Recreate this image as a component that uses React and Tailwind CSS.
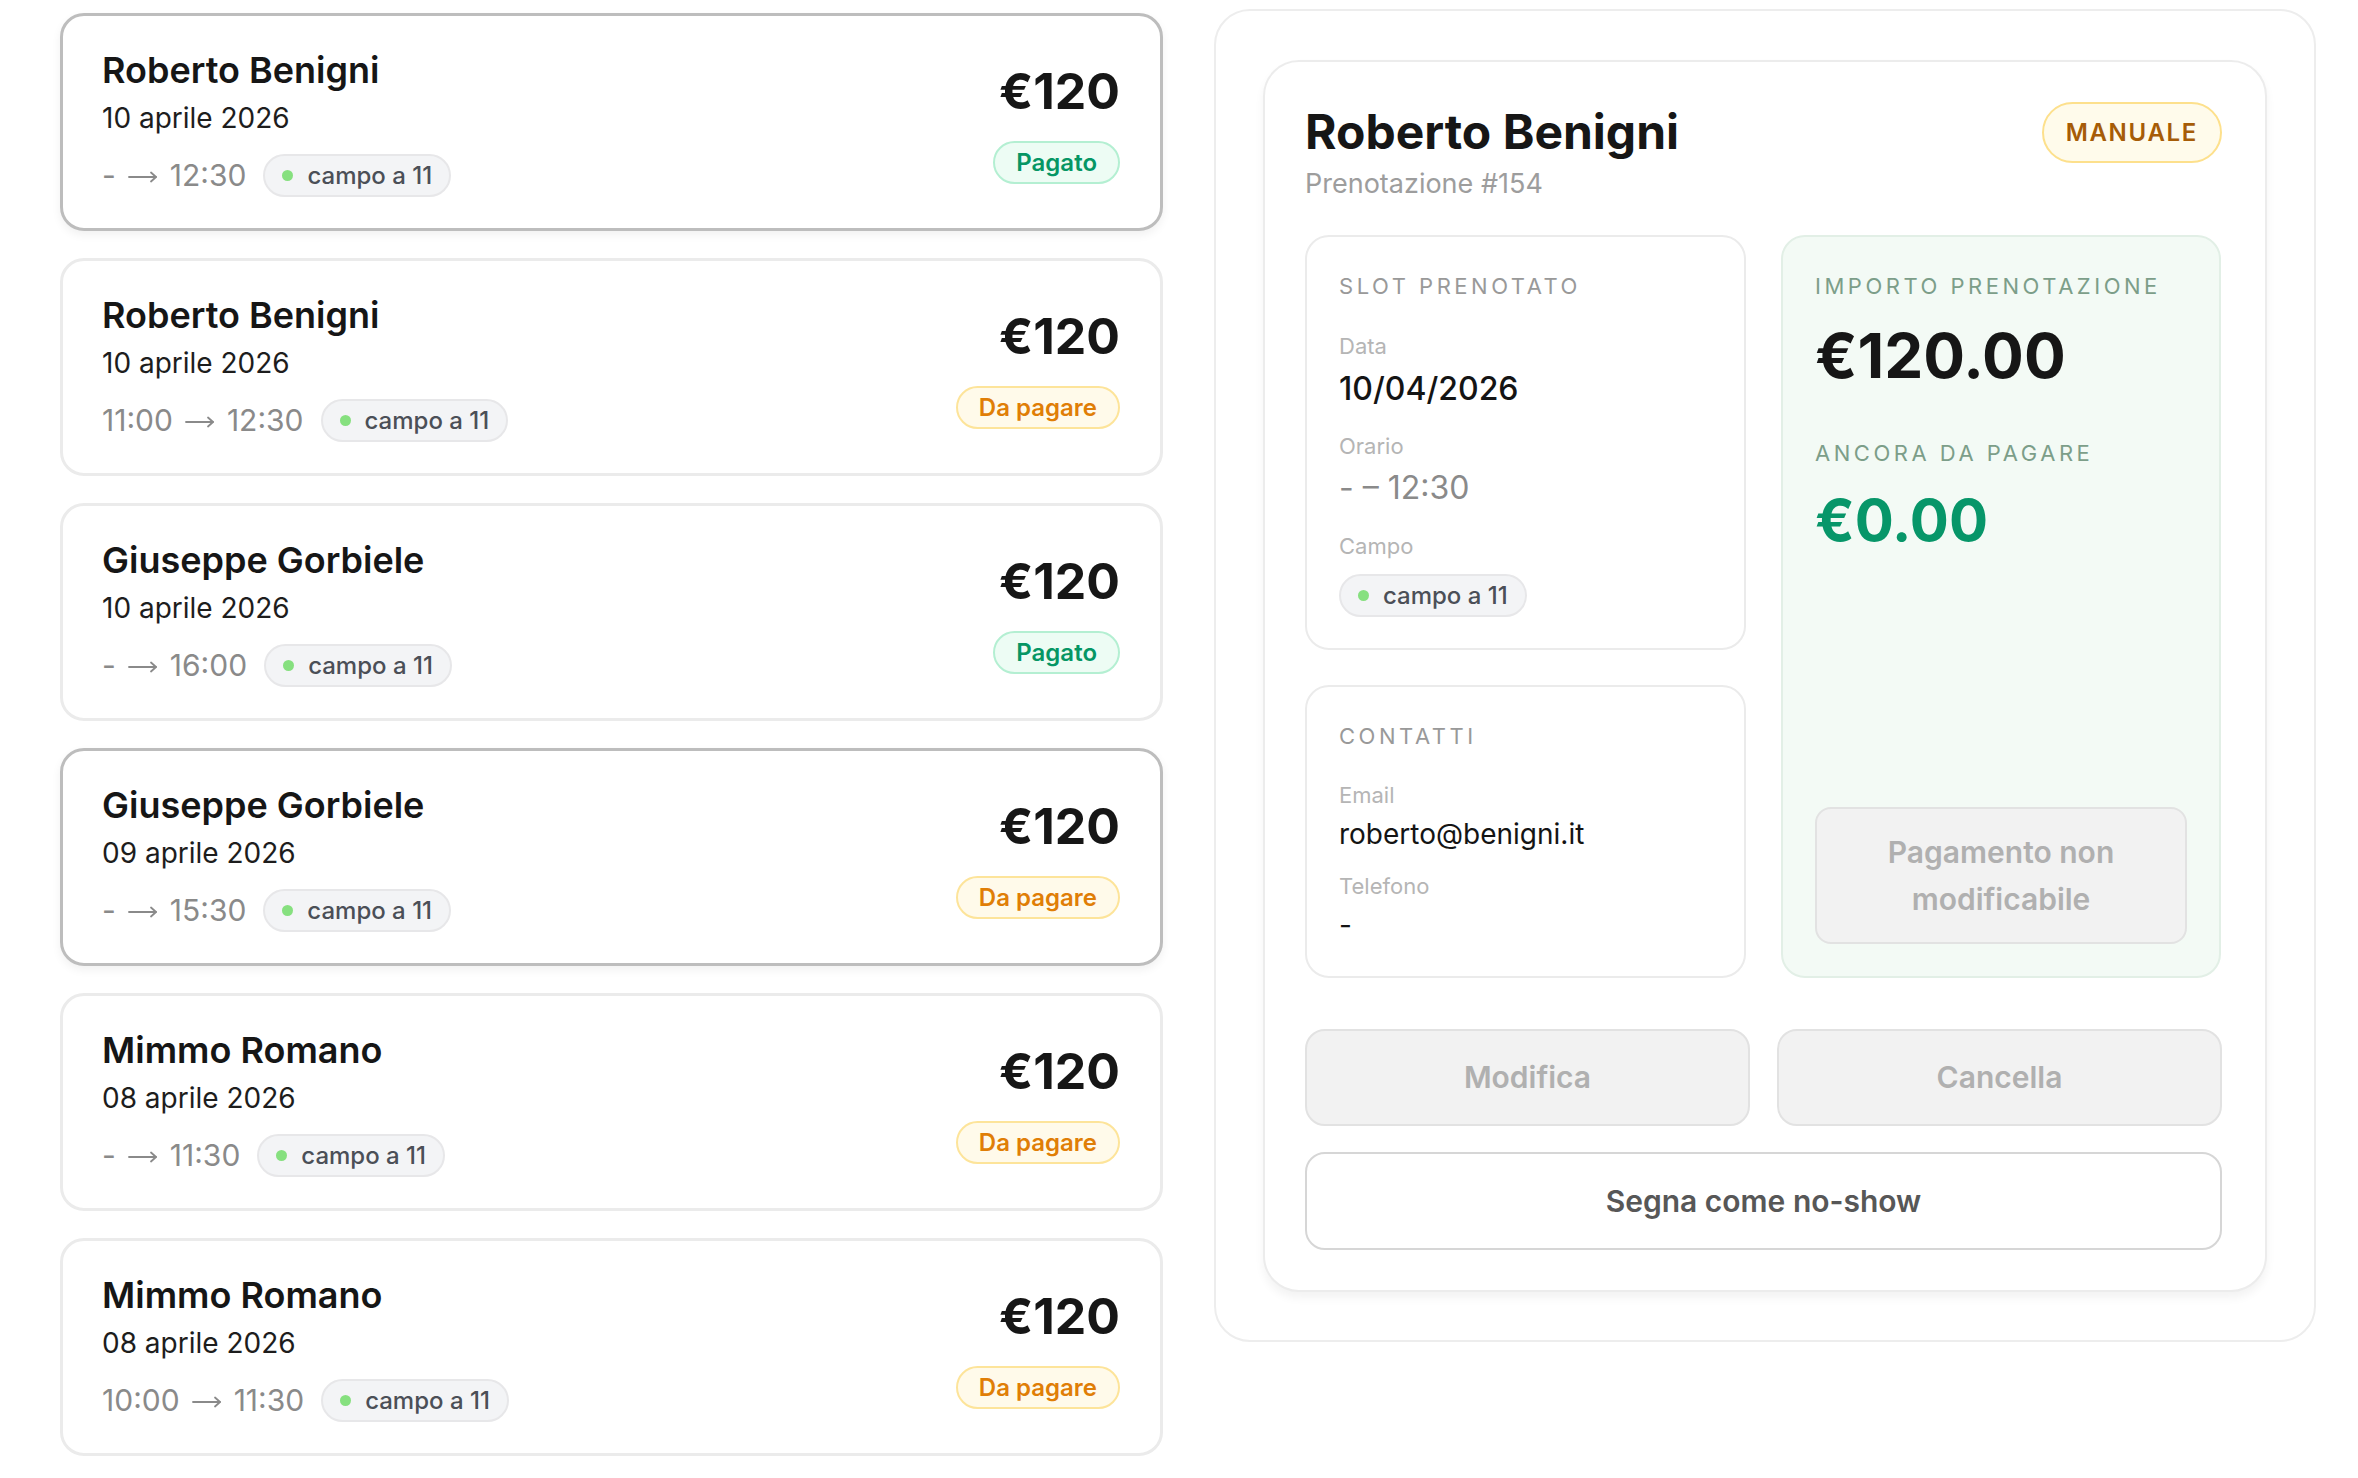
const bookings = [
  { name: "Roberto Benigni", date: "10 aprile 2026", start: "-", end: "12:30", paid: true, active: true },
  { name: "Roberto Benigni", date: "10 aprile 2026", start: "11:00", end: "12:30", paid: false },
  { name: "Giuseppe Gorbiele", date: "10 aprile 2026", start: "-", end: "16:00", paid: true },
  { name: "Giuseppe Gorbiele", date: "09 aprile 2026", start: "-", end: "15:30", paid: false, active: true },
  { name: "Mimmo Romano", date: "08 aprile 2026", start: "-", end: "11:30", paid: false },
  { name: "Mimmo Romano", date: "08 aprile 2026", start: "10:00", end: "11:30", paid: false },
];

function Arrow() {
  return (
    <svg width="30" height="14" viewBox="0 0 30 14" className="mx-[12px] mt-[2px]" fill="none" stroke="#8a8a8a" strokeWidth="1.8" strokeLinecap="round" strokeLinejoin="round">
      <path d="M1 7h27" />
      <path d="M23 2.5 28 7l-5 4.5" />
    </svg>
  );
}

function FieldChip() {
  return (
    <span className="inline-flex h-[43px] items-center gap-[14px] rounded-full border-2 border-[#e7e7e9] bg-[#f3f4f6] pl-[17px] pr-[17px] text-[24px] font-medium text-[#4b4f57]">
      <span className="h-[11px] w-[11px] rounded-full bg-[#86e07f]" />
      campo a 11
    </span>
  );
}

function StatusBadge({ paid }) {
  return paid ? (
    <span className="inline-flex h-[43px] items-center rounded-full border-2 border-[#b4efd2] bg-[#edfcf4] px-[21px] text-[24px] font-semibold text-[#069664]">
      Pagato
    </span>
  ) : (
    <span className="inline-flex h-[43px] items-center rounded-full border-2 border-[#fde49a] bg-[#fffaea] px-[21px] text-[24px] font-semibold text-[#e07e06]">
      Da pagare
    </span>
  );
}

function BookingCard({ b }) {
  return (
    <div
      className={
        "flex items-center justify-between rounded-[24px] border-[3px] bg-white pl-[39px] pr-[40px] pt-[32px] pb-[31px] " +
        (b.active ? "border-[#bdbdbd] shadow-[0_4px_10px_rgba(0,0,0,0.06)]" : "border-[#ebebeb]")
      }
    >
      <div className="flex flex-col">
        <div className="text-[36px] font-semibold leading-[44px] text-[#161616]">{b.name}</div>
        <div className="mt-[8px] text-[28px] leading-[36px] text-[#1d1d1d]">{b.date}</div>
        <div className="mt-[18px] flex h-[43px] items-center gap-[17px]">
          <span className="flex items-center text-[30px] leading-[43px] text-[#8a8a8a]">
            {b.start}
            <Arrow />
            {b.end}
          </span>
          <FieldChip />
        </div>
      </div>
      <div className="flex flex-col items-end">
        <div className="text-[50px] font-bold leading-[60px] text-[#161616]">€120</div>
        <div className="mt-[20px]">
          <StatusBadge paid={b.paid} />
        </div>
      </div>
    </div>
  );
}

function SectionLabel({ children, green }) {
  return (
    <div
      className={
        "text-[22px] leading-[30px] tracking-[0.16em] " + (green ? "text-[#7c9e89]" : "text-[#999999]")
      }
    >
      {children}
    </div>
  );
}

function FieldLabel({ children, className = "" }) {
  return <div className={"text-[22px] leading-[30px] text-[#b5b5b5] " + className}>{children}</div>;
}

function Detail() {
  return (
    <div className="w-[1102px] rounded-[36px] border-2 border-[#ededed] bg-white px-[47px] pt-[49px] pb-[48px]">
      <div className="rounded-[36px] border-2 border-[#ececec] bg-white pl-[40px] pr-[43px] pt-[40px] pb-[40px] shadow-[0_6px_10px_rgba(0,0,0,0.05)]">
        <div className="flex items-start justify-between">
          <div>
            <div className="text-[48px] font-bold leading-[60px] text-[#161616]">Roberto Benigni</div>
            <div className="mt-[4px] text-[27px] leading-[36px] text-[#9d9d9d]">Prenotazione #154</div>
          </div>
          <span className="flex h-[61px] items-center rounded-full border-2 border-[#fde08c] bg-[#fffbeb] px-[22px] text-[24px] font-semibold tracking-[0.07em] text-[#a65c07]">
            MANUALE
          </span>
        </div>

        <div className="mt-[33px] grid grid-cols-[441px_440px] gap-[35px]">
          <div className="flex flex-col gap-[35px]">
            <div className="rounded-[24px] border-2 border-[#ebebeb] bg-white px-[32px] pt-[34px] pb-[31px]">
              <SectionLabel>SLOT PRENOTATO</SectionLabel>
              <FieldLabel className="mt-[30px]">Data</FieldLabel>
              <div className="mt-[8px] text-[32px] font-medium leading-[40px] text-[#141414]">10/04/2026</div>
              <FieldLabel className="mt-[22px]">Orario</FieldLabel>
              <div className="mt-[7px] text-[32px] leading-[40px] text-[#8a8a8a]">- – 12:30</div>
              <FieldLabel className="mt-[23px]">Campo</FieldLabel>
              <div className="mt-[13px]">
                <FieldChip />
              </div>
            </div>
            <div className="rounded-[24px] border-2 border-[#ebebeb] bg-white px-[32px] pt-[34px] pb-[32px]">
              <SectionLabel>CONTATTI</SectionLabel>
              <FieldLabel className="mt-[29px]">Email</FieldLabel>
              <div className="mt-[5px] text-[28px] leading-[38px] text-[#141414]">roberto@benigni.it</div>
              <FieldLabel className="mt-[18px]">Telefono</FieldLabel>
              <div className="mt-[5px] text-[28px] leading-[38px] text-[#141414]">-</div>
            </div>
          </div>

          <div className="flex flex-col rounded-[24px] border-2 border-[#e2efe6] bg-[#f3faf5] px-[32px] pt-[34px] pb-[32px]">
            <SectionLabel green>IMPORTO PRENOTAZIONE</SectionLabel>
            <div className="mt-[17px] text-[62px] font-bold leading-[76px] text-[#161616]">€120.00</div>
            <div className="mt-[44px]">
              <SectionLabel green>ANCORA DA PAGARE</SectionLabel>
            </div>
            <div className="mt-[14px] text-[58px] font-bold leading-[76px] text-[#079669]">€0.00</div>
            <div className="mt-auto flex h-[137px] items-center justify-center rounded-[16px] border-2 border-[#e2e2e2] bg-[#f2f2f2] px-[20px] text-center text-[30px] font-semibold leading-[47px] text-[#b0b0b0]">
              Pagamento non
              <br />
              modificabile
            </div>
          </div>
        </div>

        <div className="mt-[51px] grid grid-cols-2 gap-[27px]">
          <button className="h-[97px] rounded-[20px] border-2 border-[#e2e2e2] bg-[#f2f2f2] text-[30px] font-semibold text-[#b0b0b0]">
            Modifica
          </button>
          <button className="h-[97px] rounded-[20px] border-2 border-[#e2e2e2] bg-[#f2f2f2] text-[30px] font-semibold text-[#b0b0b0]">
            Cancella
          </button>
        </div>
        <button className="mt-[26px] h-[98px] w-full rounded-[20px] border-2 border-[#d6d6d6] bg-white text-[30px] font-semibold text-[#575757]">
          Segna come no-show
        </button>
      </div>
    </div>
  );
}

export default function App() {
  return (
    <div className="min-h-screen bg-white font-['Inter',sans-serif]">
      <div className="flex items-start gap-[51px] pl-[60px] pt-[9px]">
        <div className="mt-[4px] flex w-[1103px] flex-col gap-[27px]">
          {bookings.map((b, i) => (
            <BookingCard key={i} b={b} />
          ))}
        </div>
        <Detail />
      </div>
    </div>
  );
}
